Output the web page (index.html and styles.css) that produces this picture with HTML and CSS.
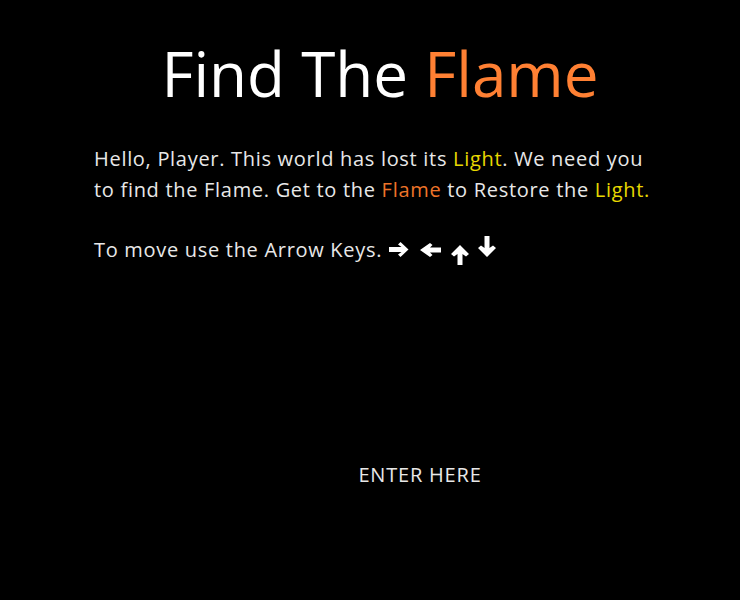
FILE: index.html
```html
<!DOCTYPE html>
<html>
<head>
<meta charset="utf-8">
<link rel="stylesheet" href="styles.css">
</head>
<body>
<main class="page">
  <h1 class="title">Find The <span class="flame">Flame</span></h1>
  <p class="intro">Hello, Player. This world has lost its <span class="light">Light</span>. We need you to find the Flame. Get to the <span class="flame-dark">Flame</span> to Restore the <span class="light">Light.</span></p>
  <p class="controls">To move use the Arrow Keys.<span class="keys"><svg class="key key-right" width="21" height="15" viewBox="0 0 21 15"><path d="M0 5h12.5L9 2.5 11.5 0 19.5 7.5 11.5 15 9 12.5 12.5 10H0z" fill="#fff"/></svg><svg class="key key-left" width="21" height="14" viewBox="0 0 21 14"><path d="M21 4.5H10L12.5 2 10 0 0 7l10 7 2.5-2-2.5-2.5H21z" fill="#fff"/></svg><svg class="key key-up" width="18" height="20" viewBox="0 0 18 20"><path d="M9 0l9 9-3 2.5L11.5 9v11h-5V9L3 11.5 0 9z" fill="#fff"/></svg><svg class="key key-down" width="18" height="21" viewBox="0 0 18 21"><path d="M9 21l9-9-3-2.5L11.5 12V0h-5v12L3 9.5 0 12z" fill="#fff"/></svg></span></p>
  <div class="enter-row"><a class="enter" href="#">ENTER HERE</a></div>
</main>
</body>
</html>
```
FILE: styles.css
```css
html, body {
  margin: 0;
  padding: 0;
  background: #000;
}
body {
  font-family: "Open Sans", "Noto Sans", sans-serif;
  color: #e8e8e8;
}
.page {
  width: 572px;
  margin-left: 94px;
  padding-top: 33px;
}
.title {
  margin: 0;
  text-align: center;
  font-weight: 400;
  font-size: 62px;
  line-height: 80px;
  color: #fff;
}
.flame {
  color: #ff8033;
}
.intro {
  width: 562px;
  margin: 30px 0 0;
  font-size: 20px;
  line-height: 31px;
  letter-spacing: 0.7px;
}
.light {
  color: #e8d800;
}
.flame-dark {
  color: #ee7429;
}
.controls {
  margin: 29px 0 0;
  font-size: 20px;
  line-height: 31px;
  letter-spacing: 0.7px;
}
.keys {
  display: inline-flex;
  align-items: flex-start;
  margin-left: 7px;
  vertical-align: top;
}
.key-right { margin-top: 8px; }
.key-left { margin-top: 9px; margin-left: 10px; }
.key-up { margin-top: 11px; margin-left: 10px; }
.key-down { margin-top: 2px; margin-left: 9px; }
.enter-row {
  display: flex;
  justify-content: center;
  padding-left: 80px;
  margin-top: 194px;
  line-height: 31px;
}
.enter {
  font-size: 20px;
  letter-spacing: 0.8px;
  color: #e8e8e8;
  text-decoration: none;
}
```
